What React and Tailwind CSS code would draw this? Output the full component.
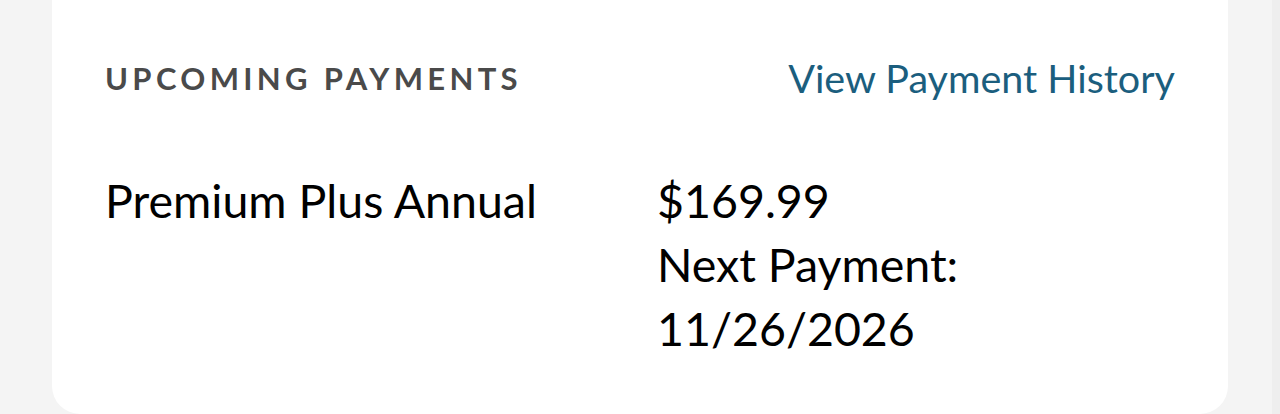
import React from 'react';

const UpcomingPayments = () => {
  return (
    <div className="bg-white rounded-b-[28px] w-[1176px] h-full px-[53px] pt-[56px]">
      <div className="flex items-center justify-between h-[44px]">
        <h2 className="text-[31px] font-bold tracking-[0.14em] text-[#4a4a4a] leading-none">UPCOMING PAYMENTS</h2>
        <a href="#" className="text-[39.5px] text-[#1b5e7e] leading-none">View Payment History</a>
      </div>
      <div className="flex mt-[68px] text-[46.5px] text-black leading-[64px]">
        <div className="w-[552px]">Premium Plus Annual</div>
        <div className="flex flex-col">
          <span>$169.99</span>
          <span>Next Payment:</span>
          <span>11/26/2026</span>
        </div>
      </div>
    </div>
  );
};

export default function App() {
  return (
    <div className="h-[414px] bg-[#f4f4f4] flex font-['Lato',sans-serif] overflow-hidden">
      <div className="flex-1 pl-[52px]">
        <UpcomingPayments />
      </div>
      <div className="w-[8px] bg-[#eeeeee]" />
    </div>
  );
}
